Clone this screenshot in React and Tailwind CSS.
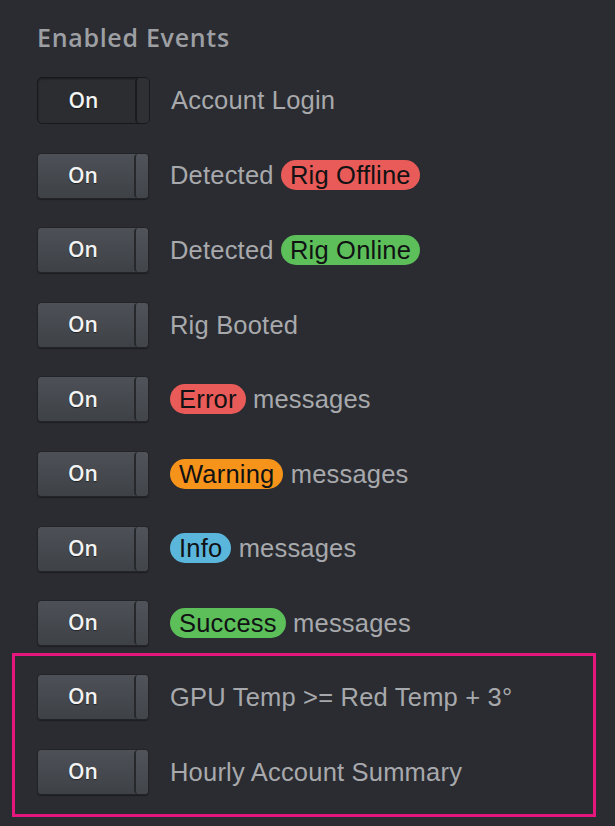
import React from 'react'

const badgeColors = {
    red: 'bg-[#e85b58]',
    green: 'bg-[#5cbf5a]',
    orange: 'bg-[#f6931b]',
    blue: 'bg-[#5bb6dc]',
}

function Badge({color, children}) {
    return (
        <span className={`${badgeColors[color]} inline-block h-[30px] rounded-full px-[9px] leading-[30px] text-[#111214]`}>
            {children}
        </span>
    )
}

function Toggle({dark}) {
    return (
        <div className={dark
            ? 'flex h-[47px] w-[113px] shrink-0 rounded-[5px] border border-[#18191c] bg-[#2b2d31] shadow-[inset_0_1px_2px_rgba(0,0,0,0.4)]'
            : 'flex h-[46px] w-[112px] shrink-0 rounded-[4px] border border-[#232428] bg-gradient-to-b from-[#4d5056] to-[#3e4146] shadow-[0_1px_1px_rgba(0,0,0,0.35)]'}>
            <div className="flex flex-1 items-center justify-center pr-[6px] font-['Open_Sans',sans-serif] text-[21px] font-semibold text-[#f3f3f3] [text-shadow:0_1px_1px_rgba(0,0,0,0.5)]">
                On
            </div>
            <div className={dark
                ? 'w-[14px] rounded-[4px] border-l-2 border-[#1a1b1e] bg-[#2e3034]'
                : 'w-[14px] rounded-[4px] border-l-2 border-[#26282c] bg-gradient-to-b from-[#50535a] to-[#42454a]'} />
        </div>
    )
}

function Row({dark, children}) {
    return (
        <div className="flex items-center">
            <Toggle dark={dark} />
            <div className="ml-[21px] whitespace-nowrap text-[25.5px] tracking-[0.2px] text-[#a8a9ac]">{children}</div>
        </div>
    )
}

export default function App() {
    return (
        <div className="min-h-screen bg-[#2a2c31] pt-[22px] font-['Liberation_Sans',Arial,sans-serif]">
            <h2 className="ml-[37px] h-[30px] font-['Open_Sans',sans-serif] text-[25px] font-semibold leading-[30px] tracking-[0.7px] text-[#9d9fa3]">Enabled Events</h2>

            <div className="mt-[25px] flex flex-col gap-[28.6px] pl-[37px]">
                <Row dark>Account Login</Row>
                <Row>Detected <Badge color="red">Rig Offline</Badge></Row>
                <Row>Detected <Badge color="green">Rig Online</Badge></Row>
                <Row>Rig Booted</Row>
                <Row><Badge color="red">Error</Badge> messages</Row>
                <Row><Badge color="orange">Warning</Badge> messages</Row>
                <Row><Badge color="blue">Info</Badge> messages</Row>
                <Row><Badge color="green">Success</Badge> messages</Row>
            </div>

            <div className="ml-[12px] mt-[7px] flex w-[584px] flex-col gap-[29px] border-[3px] border-[#e5177e] pb-[19px] pl-[22px] pt-[18px]">
                <Row>GPU Temp &gt;= Red Temp + 3°</Row>
                <Row>Hourly Account Summary</Row>
            </div>
        </div>
    )
}
